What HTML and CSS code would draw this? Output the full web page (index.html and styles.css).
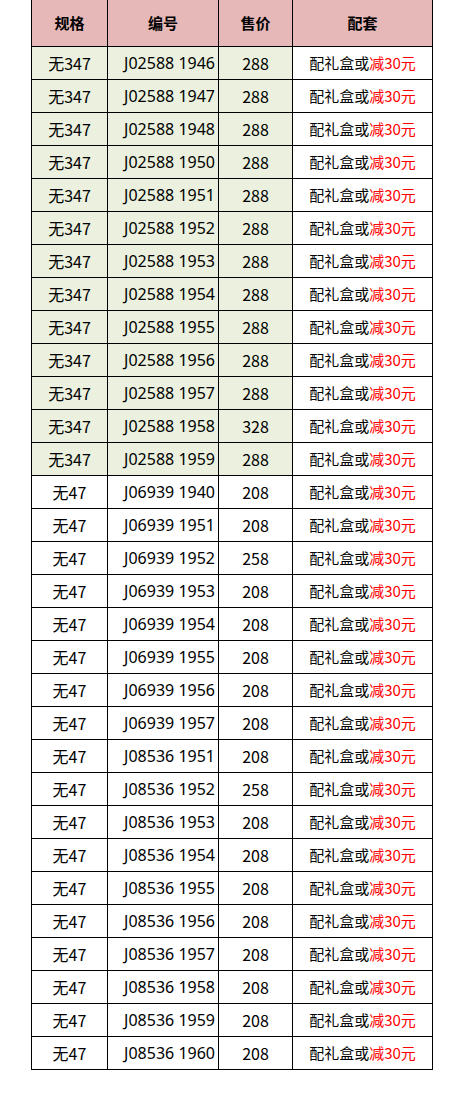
FILE: index.html
```html
<!DOCTYPE html>
<html lang="zh-CN">
<head>
<meta charset="utf-8">
<title>价格表</title>
<link rel="stylesheet" href="styles.css">
</head>
<body>
<div class="wrap">
<table class="price">
<colgroup><col class="c1"><col class="c2"><col class="c3"><col class="c4"></colgroup>
<thead>
<tr><th>规格</th><th>编号</th><th>售价</th><th>配套</th></tr>
</thead>
<tbody>
<tr class="g"><td>无347</td><td class="code">J02588 1946</td><td>288</td><td class="gift">配礼盒或<span class="red">减30元</span></td></tr>
<tr class="g"><td>无347</td><td class="code">J02588 1947</td><td>288</td><td class="gift">配礼盒或<span class="red">减30元</span></td></tr>
<tr class="g"><td>无347</td><td class="code">J02588 1948</td><td>288</td><td class="gift">配礼盒或<span class="red">减30元</span></td></tr>
<tr class="g"><td>无347</td><td class="code">J02588 1950</td><td>288</td><td class="gift">配礼盒或<span class="red">减30元</span></td></tr>
<tr class="g"><td>无347</td><td class="code">J02588 1951</td><td>288</td><td class="gift">配礼盒或<span class="red">减30元</span></td></tr>
<tr class="g"><td>无347</td><td class="code">J02588 1952</td><td>288</td><td class="gift">配礼盒或<span class="red">减30元</span></td></tr>
<tr class="g"><td>无347</td><td class="code">J02588 1953</td><td>288</td><td class="gift">配礼盒或<span class="red">减30元</span></td></tr>
<tr class="g"><td>无347</td><td class="code">J02588 1954</td><td>288</td><td class="gift">配礼盒或<span class="red">减30元</span></td></tr>
<tr class="g"><td>无347</td><td class="code">J02588 1955</td><td>288</td><td class="gift">配礼盒或<span class="red">减30元</span></td></tr>
<tr class="g"><td>无347</td><td class="code">J02588 1956</td><td>288</td><td class="gift">配礼盒或<span class="red">减30元</span></td></tr>
<tr class="g"><td>无347</td><td class="code">J02588 1957</td><td>288</td><td class="gift">配礼盒或<span class="red">减30元</span></td></tr>
<tr class="g"><td>无347</td><td class="code">J02588 1958</td><td>328</td><td class="gift">配礼盒或<span class="red">减30元</span></td></tr>
<tr class="g"><td>无347</td><td class="code">J02588 1959</td><td>288</td><td class="gift">配礼盒或<span class="red">减30元</span></td></tr>
<tr><td>无47</td><td class="code">J06939 1940</td><td>208</td><td class="gift">配礼盒或<span class="red">减30元</span></td></tr>
<tr><td>无47</td><td class="code">J06939 1951</td><td>208</td><td class="gift">配礼盒或<span class="red">减30元</span></td></tr>
<tr><td>无47</td><td class="code">J06939 1952</td><td>258</td><td class="gift">配礼盒或<span class="red">减30元</span></td></tr>
<tr><td>无47</td><td class="code">J06939 1953</td><td>208</td><td class="gift">配礼盒或<span class="red">减30元</span></td></tr>
<tr><td>无47</td><td class="code">J06939 1954</td><td>208</td><td class="gift">配礼盒或<span class="red">减30元</span></td></tr>
<tr><td>无47</td><td class="code">J06939 1955</td><td>208</td><td class="gift">配礼盒或<span class="red">减30元</span></td></tr>
<tr><td>无47</td><td class="code">J06939 1956</td><td>208</td><td class="gift">配礼盒或<span class="red">减30元</span></td></tr>
<tr><td>无47</td><td class="code">J06939 1957</td><td>208</td><td class="gift">配礼盒或<span class="red">减30元</span></td></tr>
<tr><td>无47</td><td class="code">J08536 1951</td><td>208</td><td class="gift">配礼盒或<span class="red">减30元</span></td></tr>
<tr><td>无47</td><td class="code">J08536 1952</td><td>258</td><td class="gift">配礼盒或<span class="red">减30元</span></td></tr>
<tr><td>无47</td><td class="code">J08536 1953</td><td>208</td><td class="gift">配礼盒或<span class="red">减30元</span></td></tr>
<tr><td>无47</td><td class="code">J08536 1954</td><td>208</td><td class="gift">配礼盒或<span class="red">减30元</span></td></tr>
<tr><td>无47</td><td class="code">J08536 1955</td><td>208</td><td class="gift">配礼盒或<span class="red">减30元</span></td></tr>
<tr><td>无47</td><td class="code">J08536 1956</td><td>208</td><td class="gift">配礼盒或<span class="red">减30元</span></td></tr>
<tr><td>无47</td><td class="code">J08536 1957</td><td>208</td><td class="gift">配礼盒或<span class="red">减30元</span></td></tr>
<tr><td>无47</td><td class="code">J08536 1958</td><td>208</td><td class="gift">配礼盒或<span class="red">减30元</span></td></tr>
<tr><td>无47</td><td class="code">J08536 1959</td><td>208</td><td class="gift">配礼盒或<span class="red">减30元</span></td></tr>
<tr><td>无47</td><td class="code">J08536 1960</td><td>208</td><td class="gift">配礼盒或<span class="red">减30元</span></td></tr>
</tbody>
</table>
</div>
</body>
</html>
```
FILE: styles.css
```css
html, body {
  margin: 0;
  padding: 0;
  background: #fff;
}
.wrap {
  padding-left: 31px;
}
.price {
  border-collapse: separate;
  border-spacing: 0;
  table-layout: fixed;
  width: 402px;
  font-family: "Noto Sans CJK SC", "Noto Sans", sans-serif;
  font-size: 15px;
  color: #000;
}
.c1 { width: 77px; }
.c2 { width: 111px; }
.c3 { width: 74px; }
.c4 { width: 140px; }
.price th,
.price td {
  box-sizing: border-box;
  padding: 0;
  text-align: center;
  border-right: 1px solid #000;
  border-bottom: 1px solid #000;
  white-space: nowrap;
  line-height: 20px;
}
.price th:first-child,
.price td:first-child {
  border-left: 1px solid #000;
}
.price th {
  height: 47px;
  background: #e6b8b7;
  font-weight: bold;
}
.price td {
  height: 33px;
  font-weight: normal;
  font-size: 16px;
}
.price td.code {
  text-align: right;
  padding-right: 3px;
  font-family: "Noto Sans", "Noto Sans CJK SC", sans-serif;
}
.price td.gift {
  font-size: 15px;
}
.price tr.g td {
  background: #ebf1de;
}
.price tr.g td.gift {
  background: #fff;
}
.red {
  color: #ff0000;
}
```
